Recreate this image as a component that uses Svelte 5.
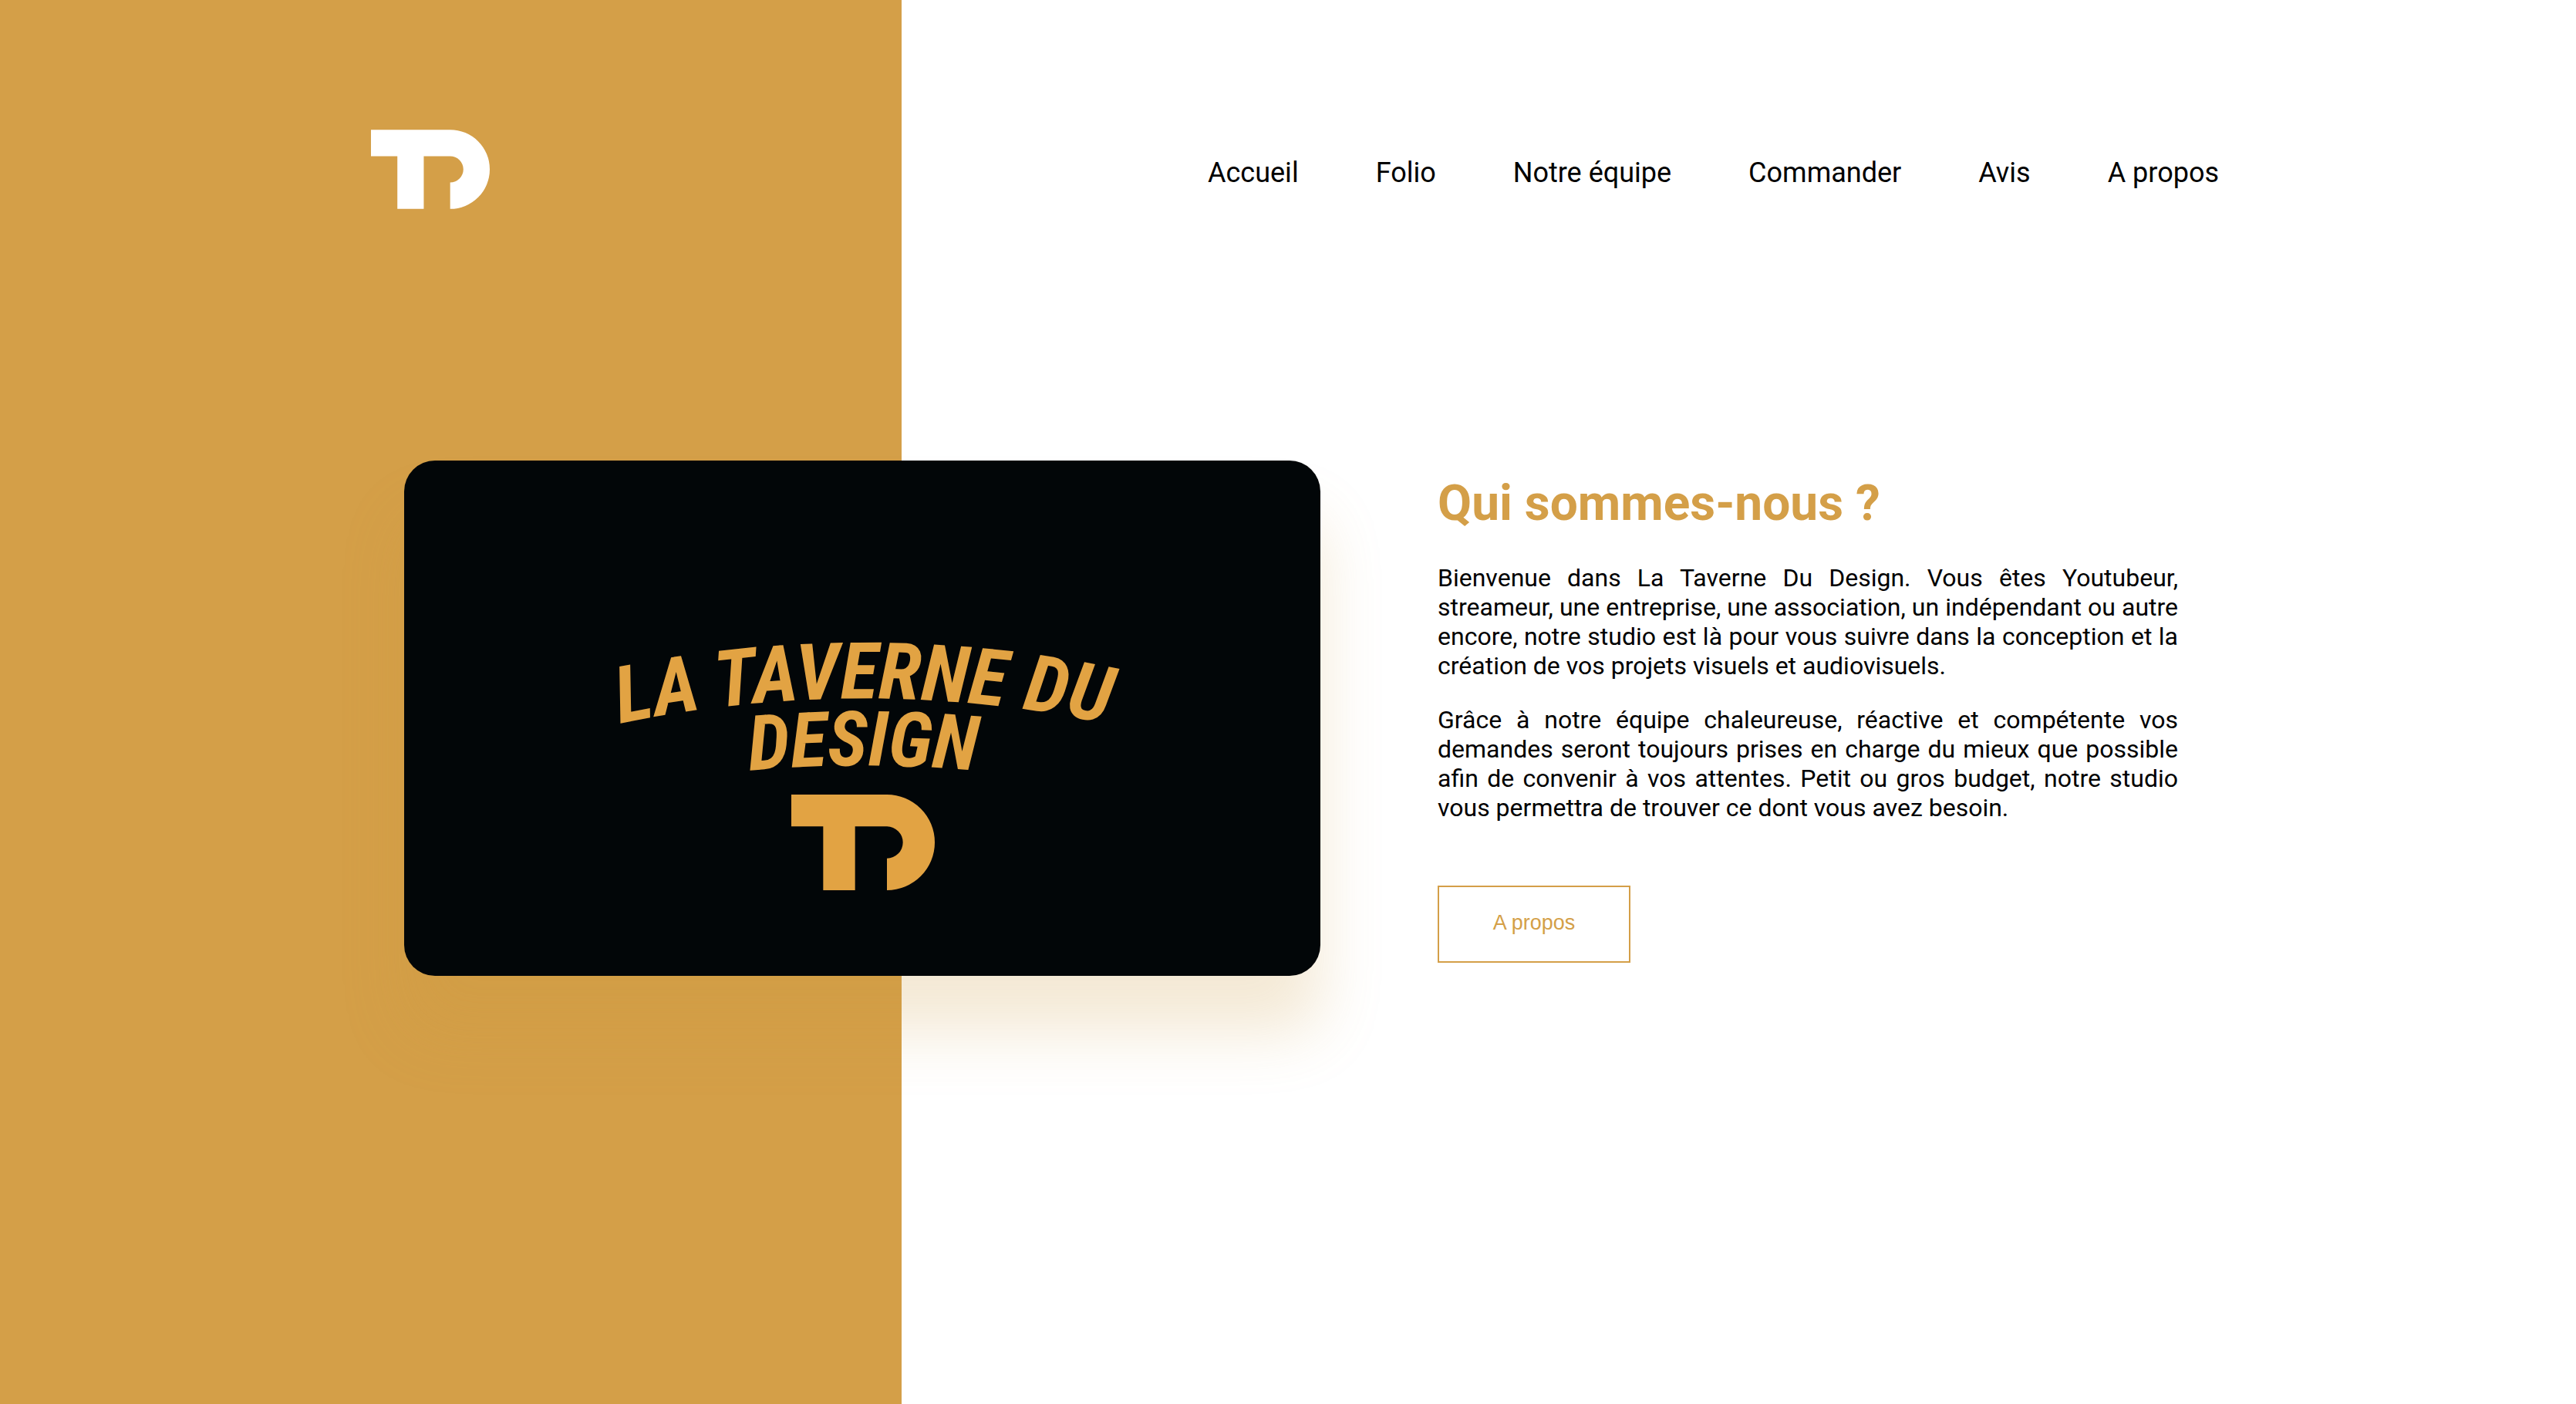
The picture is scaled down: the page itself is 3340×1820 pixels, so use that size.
<script>
  const links = ['Accueil', 'Folio', 'Notre équipe', 'Commander', 'Avis', 'A propos'];
  const mark = 'M0 0H60A30 30 0 0 1 60 60V40A10 10 0 0 0 60 20H40V60H20V20H0Z';
</script>

<div class="page">
  <header class="header">
    <a class="logo" href="#accueil" aria-label="La Taverne Du Design">
      <svg viewBox="0 0 90 60" aria-hidden="true"><path d={mark} /></svg>
    </a>
    <nav aria-label="Navigation principale">
      <ul class="links">
        {#each links as link}
          <li><a href="#{link}">{link}</a></li>
        {/each}
      </ul>
    </nav>
  </header>

  <main class="intro">
    <figure class="card">
      <svg viewBox="0 0 1188 668" role="img" aria-label="La Taverne Du Design">
        <defs>
          <path id="arc-top" d="M196 361A1550 1550 0 0 1 996 361" />
          <path id="arc-bottom" d="M345 415A1600 1600 0 0 1 845 415" />
        </defs>
        <text class="arched top"><textPath href="#arc-top" startOffset="50%">LA TAVERNE DU</textPath></text>
        <text class="arched"><textPath href="#arc-bottom" startOffset="50%">DESIGN</textPath></text>
        <svg x="502" y="433" width="186" height="124" viewBox="0 0 90 60"><path d={mark} /></svg>
      </svg>
    </figure>

    <section class="about">
      <h1>Qui sommes-nous ?</h1>
      <p>
        Bienvenue dans La Taverne Du Design. Vous êtes Youtubeur, streameur, une entreprise, une
        association, un indépendant ou autre encore, notre studio est là pour vous suivre dans la
        conception et la création de vos projets visuels et audiovisuels.
      </p>
      <p>
        Grâce à notre équipe chaleureuse, réactive et compétente vos demandes seront toujours prises
        en charge du mieux que possible afin de convenir à vos attentes. Petit ou gros budget, notre
        studio vous permettra de trouver ce dont vous avez besoin.
      </p>
      <button type="button">A propos</button>
    </section>
  </main>
</div>

<style>
  :global(body) {
    margin: 0;
  }

  .page {
    box-sizing: border-box;
    min-height: 100vh;
    padding-top: 168px;
    background: linear-gradient(to right, #d49f48 35%, #fff 35%);
    color: #000;
    font-family: Roboto, sans-serif;
  }

  .header {
    display: flex;
    align-items: center;
    justify-content: space-between;
    padding: 0 463px 0 481px;
  }

  .logo svg {
    display: block;
    width: 154px;
    height: 103px;
    fill: #fff;
  }

  .links {
    display: flex;
    gap: 100px;
    margin: 0;
    padding: 8px 0 0;
    list-style: none;
    font-size: 36px;
    line-height: 42px;
  }

  .links a {
    color: inherit;
    text-decoration: none;
  }

  .intro {
    display: grid;
    grid-template-columns: 1188fr 960fr;
    gap: 152px;
    align-items: center;
    margin-top: 326px;
    padding: 0 516px 0 524px;
  }

  .card {
    margin: 0;
    border-radius: 40px;
    background: #020608;
    box-shadow: 0 74px 80px rgba(206, 154, 66, 0.22);
  }

  .card > svg {
    display: block;
    width: 100%;
    fill: #e2a343;
  }

  .arched {
    font-family: 'Roboto Condensed', Roboto, sans-serif;
    font-size: 99px;
    font-weight: 700;
    font-style: italic;
    text-anchor: middle;
  }

  .top {
    font-size: 102px;
  }

  h1 {
    margin: 0 0 38px;
    color: #d49f48;
    font-size: 64px;
    font-weight: 700;
    line-height: 78px;
  }

  p {
    margin: 0 0 32px;
    font-size: 32px;
    line-height: 38px;
    text-align: justify;
  }

  button {
    display: block;
    width: 250px;
    height: 100px;
    margin-top: 82px;
    padding: 0 0 4px;
    border: 2px solid #d49f48;
    background: transparent;
    color: #d49f48;
    font-family: 'Liberation Sans', Arial, sans-serif;
    font-size: 27px;
  }
</style>
